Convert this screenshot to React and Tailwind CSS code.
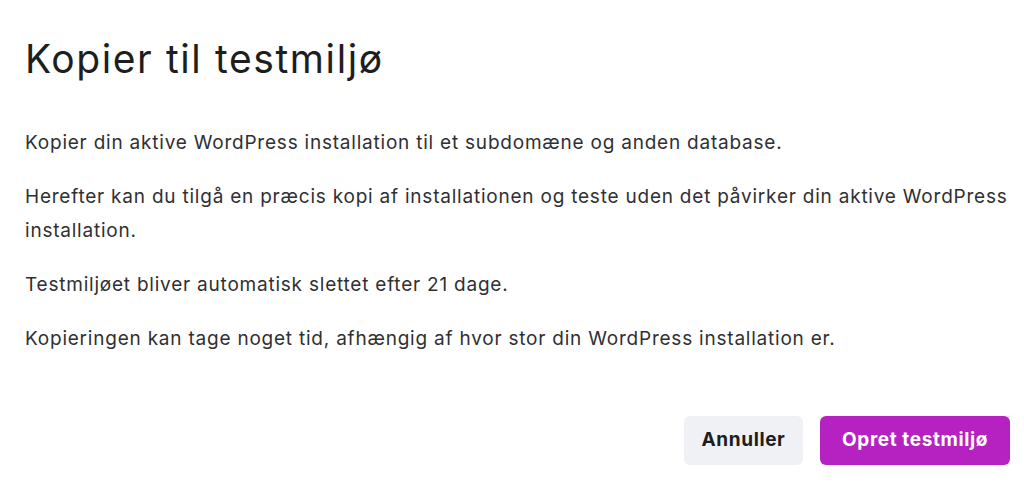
export default function App() {
  return (
    <div className="w-[1024px] h-[486px] bg-white text-[#1d1e20] flex flex-col" style={{ fontFamily: "Inter, 'DejaVu Sans', sans-serif" }}>
      <div className="pl-[25px] pr-[14px] pt-[36px] flex-1 flex flex-col">
        <h1 className="text-[39px] leading-[46px] font-normal tracking-[1.6px]">Kopier til testmiljø</h1>
        <div className="mt-[44px] text-[19px] leading-[34px] tracking-[0.78px] text-[#2f3033] flex flex-col gap-[20px]">
          <p>Kopier din aktive WordPress installation til et subdomæne og anden database.</p>
          <p>Herefter kan du tilgå en præcis kopi af installationen og teste uden det påvirker din aktive WordPress installation.</p>
          <p>Testmiljøet bliver automatisk slettet efter 21 dage.</p>
          <p>Kopieringen kan tage noget tid, afhængig af hvor stor din WordPress installation er.</p>
        </div>
        <div className="mt-auto mb-[21px] flex justify-end gap-[17px]">
          <button className="h-[49px] w-[119px] rounded-[6px] bg-[#f0f1f5] text-[19px] tracking-[0.6px] font-bold text-[#1d1e20]">Annuller</button>
          <button className="h-[49px] w-[190px] rounded-[6px] bg-[#b622c1] text-[19px] tracking-[0.6px] font-bold text-white">Opret testmiljø</button>
        </div>
      </div>
    </div>
  );
}
